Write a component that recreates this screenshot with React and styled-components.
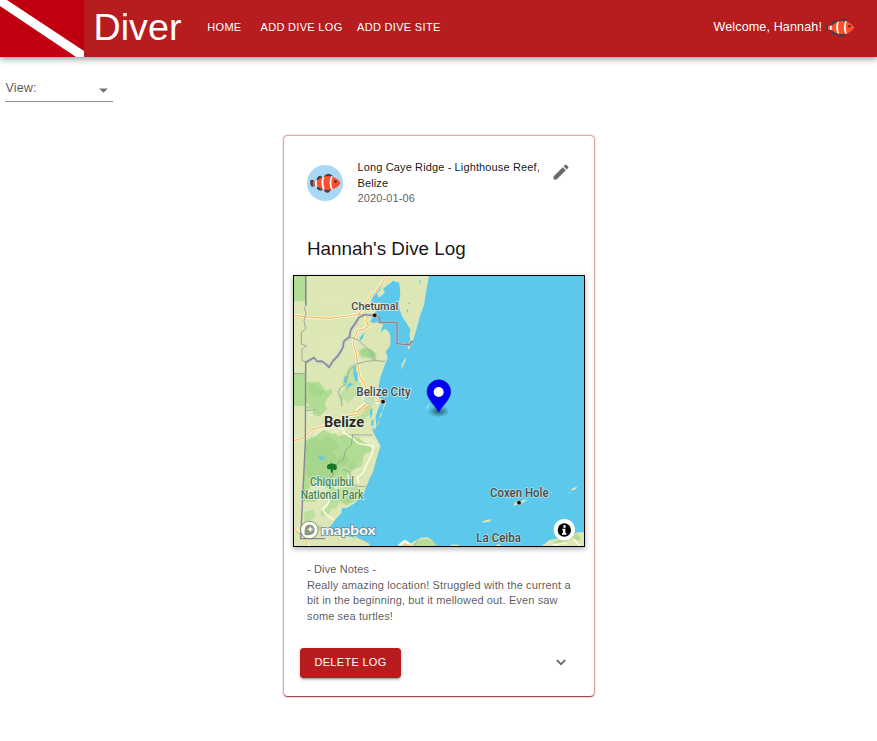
import React from "react";
import styled, { createGlobalStyle } from "styled-components";

const GlobalStyle = createGlobalStyle`
  *, *::before, *::after { box-sizing: border-box; }
  body {
    margin: 0;
    background: #fff;
    color: rgba(0, 0, 0, 0.92);
    font-family: "Liberation Sans", Helvetica, Arial, sans-serif;
    overflow: hidden;
  }
`;

const Page = styled.div`
  min-height: 741px;
`;

const AppBar = styled.header`
  display: flex;
  align-items: center;
  height: 57px;
  padding-right: 22px;
  background: #b71c1f;
  color: #fff;
  box-shadow: 0 2px 4px -1px rgba(0, 0, 0, 0.2), 0 4px 5px rgba(0, 0, 0, 0.14),
    0 1px 10px rgba(0, 0, 0, 0.12);
`;

const FlagLogo = styled.svg`
  display: block;
  flex: none;
  width: 84px;
  height: 57px;
`;

const Brand = styled.h1`
  margin: 0 0 3px 9.5px;
  font-size: 37.7px;
  line-height: 44px;
  font-weight: 400;
`;

const Nav = styled.nav`
  display: flex;
  flex: 1;
  margin-left: 25.8px;
  margin-bottom: 2px;
`;

const NavLink = styled.a`
  margin-right: ${(p) => p.$gap || 0}px;
  font-size: 11px;
  line-height: 19px;
  letter-spacing: 0.314px;
  text-transform: uppercase;
  white-space: nowrap;
`;

const Welcome = styled.div`
  display: flex;
  align-items: center;
  gap: 3px;
  margin-bottom: 3px;
  font-size: 12.57px;
  letter-spacing: 0.118px;
`;

const FishIcon = styled.svg`
  display: block;
  width: ${(p) => p.$width}px;
  height: ${(p) => p.$height}px;
`;

const ViewSelect = styled.div`
  display: flex;
  align-items: center;
  justify-content: space-between;
  width: 108px;
  height: 28px;
  margin: 17px 0 0 5px;
  padding: 0 5px 0 0.5px;
  border-bottom: 1px solid #8c8c8c;
  color: rgba(0, 0, 0, 0.68);
  font-size: 12.57px;
  letter-spacing: 0.118px;
`;

const Arrow = styled.svg`
  width: 9px;
  height: 5px;
  margin-top: 5px;
`;

const Card = styled.article`
  width: 310px;
  height: 560px;
  margin: 34px 0 0 284px;
  border-radius: 4px;
  background: #fff;
  box-shadow: 0 2px 1px -1px rgba(110, 20, 20, 0.5), 0 1px 1px rgba(130, 20, 20, 0.34),
    0 0 1.5px 0.5px rgba(183, 28, 28, 0.48);
`;

const CardHeader = styled.div`
  display: flex;
  height: 92px;
  padding: 24px 24px 0 23px;
`;

const Avatar = styled.div`
  display: flex;
  align-items: center;
  justify-content: center;
  flex: none;
  width: 36px;
  height: 36px;
  margin: 5px 14.5px 0 0;
  border-radius: 50%;
  background: #a9d8f7;
`;

const HeaderText = styled.div`
  flex: 1;
  font-size: 11px;
  line-height: 15.7px;
  letter-spacing: 0.13px;
  white-space: nowrap;
`;

const Muted = styled.div`
  color: rgba(0, 0, 0, 0.68);
`;

const Pencil = styled.svg`
  flex: none;
  width: 20px;
  height: 20px;
  margin: 2px -1px 0 0;
  fill: #6a6a6a;
`;

const Title = styled.h2`
  margin: 0 0 0 23px;
  padding-top: 7.5px;
  height: 47px;
  font-size: 18.86px;
  line-height: 26px;
  font-weight: 400;
`;

const MapFrame = styled.div`
  width: 292px;
  height: 272px;
  margin-left: 9px;
  border: 1px solid #000;
  box-shadow: 0 2px 4px rgba(0, 0, 0, 0.22), 0 2px 8px rgba(0, 0, 0, 0.12);
`;

const MapArt = styled.svg`
  display: block;
  width: 290px;
  height: 270px;
`;

const MapLabel = styled.text`
  font-family: Roboto, "Open Sans", sans-serif;
  font-size: ${(p) => p.$size || 35}px;
  font-weight: ${(p) => p.$weight || 500};
  fill: ${(p) => p.$color || "#4a4a4a"};
  stroke: ${(p) => p.$halo || "rgba(245,248,240,0.8)"};
  stroke-width: 5px;
  stroke-linejoin: round;
  paint-order: stroke;
`;

const Notes = styled.div`
  margin: 15px 0 0 23px;
  color: rgba(0, 0, 0, 0.68);
  font-size: 11px;
  line-height: 15.7px;
  letter-spacing: 0.13px;
  white-space: nowrap;
`;

const Actions = styled.div`
  display: flex;
  align-items: center;
  justify-content: space-between;
  margin: 23px 26px 0 16px;
`;

const DeleteButton = styled.button`
  width: 101px;
  height: 30px;
  padding: 0 0 1px;
  border: 0;
  border-radius: 3.5px;
  background: #b71c1f;
  color: #fff;
  font-family: inherit;
  font-size: 11px;
  letter-spacing: 0.314px;
  box-shadow: 0 3px 1px -2px rgba(0, 0, 0, 0.2), 0 2px 2px rgba(0, 0, 0, 0.14),
    0 1px 5px rgba(0, 0, 0, 0.12);
`;

const Chevron = styled.svg`
  width: 14px;
  height: 14px;
  margin-top: -1px;
`;

function Clownfish({ width, height }) {
  return (
    <FishIcon $width={width} $height={height} viewBox="0 0 90 58" aria-label="Clownfish">
      <g fill="#3e4347">
        <path d="M1 22Q6 17 13 24L18 29L13 38Q6 42 2 36Q0 28 1 22Z" />
        <path d="M19 18Q23 8 31 8L38 14L34 22L22 23Z" />
        <path d="M39 11Q48 0 58 3Q67 6 69 15L50 19Z" />
        <path d="M20 40L34 42L36 50Q28 53 21 47Z" />
        <path d="M40 46L62 45Q58 58 49 57Q41 56 40 46Z" />
      </g>
      <path fill="#ff4f2b" d="M8 23Q13 23 18 27Q28 10 53 9Q77 10 89 29Q79 48 53 49Q29 49 18 34Q13 38 8 37Z" />
      <path fill="#fff" d="M15 24L21 24Q17 30 21 37L15 36Q12 30 15 24ZM36 13L42 11Q35 29 43 48L37 46Q30 29 36 13ZM61 9L66 11Q58 29 66 47L61 48Q53 29 61 9Z" />
      <circle cx="74" cy="25" r="4" fill="#3e322f" />
    </FishIcon>
  );
}

const COAST =
  "M12 12H417L409 55L402 100L391 128L381 166L371 200L361 224L356 235L353 222L361 204L358 188L362 174L350 154L337 134L328 111L327 90L331 67L326 30L300 34L279 51L285 63L270 74L252 82L240 97L262 92L286 88L282 101L263 112L251 127L241 150L252 153L268 149L280 158L275 176L286 170L298 181L302 198L300 222L287 239L293 257L284 280L276 302L270 320L266 343L263 370L272 395L264 412L256 438L260 462L250 480L259 498L272 522L266 539L258 566L250 598L238 621L230 642L222 662L206 682L192 695L170 708L155 709L155 723L137 742L123 761L107 775L110 793L140 809L150 822H12Z";

function DiveMap() {
  return (
    <MapArt viewBox="12 12 870 810" aria-label="Dive site map">
      <rect x="12" y="12" width="870" height="810" fill="#5bc8ec" />
      <path d={COAST} fill="#dce7b5" />

      <g fill="#b0dc94">
        <path d="M12 12H47V80L38 88H12ZM12 305H46V402H12Z" />
        <path d="M49 330L88 329L107 356L126 351V363L109 382L104 402L74 409L48 390Z" />
        <path d="M205 238L219 227L243 230L260 247L258 264L246 265L235 257L215 257Z" />
        <path d="M181 277L201 282L205 330L220 350L210 376L195 370L176 395L161 380L151 394L146 369L165 350L155 329L167 303Z" opacity=".6" />
        <path d="M49 401L102 398L112 410L87 434L65 424L50 440ZM45 508L99 475L129 470L142 493L177 486L207 499L226 512L244 509L256 521L242 537L221 548L218 567L201 570L192 593L169 608L173 626L154 633L139 628L130 656L96 673L74 690L40 688Z" />
        <path d="M130 650L199 643L215 659L205 681L169 701L147 690L139 710L124 710L119 725L96 734L90 720L113 705ZM44 719L69 715L76 730L64 745L41 750Z" opacity=".75" />
        <path d="M191 412L248 404L244 425L226 437L216 455L189 441Z" opacity=".7" />
      </g>
      <g fill="#9bd184" opacity=".5">
        <path d="M47 512L74 498L91 509L108 492L132 500L149 523L128 538L142 558L165 546L176 567L161 582L144 576L145 599L113 625L65 625L46 604Z" />
        <path d="M53 340L70 333L82 349L103 357L90 374L62 367ZM214 233L241 232L257 245L250 256L218 250Z" />
        <path d="M152 686L180 666L201 669L189 690L165 694ZM175 577L220 566L214 584L181 594Z" />
      </g>
      <g fill="#edf0cf" opacity=".7">
        <path d="M69 483L105 455L128 459L153 480L126 486L102 474L68 499ZM207 499L243 496L267 520L250 534L234 518Z" />
        <path d="M67 630L120 651L74 683L45 679ZM47 410H70L67 430L50 442Z" />
      </g>
      <path d="M56 270L117 285L155 220L180 195L145 178L85 188ZM53 75L142 55L191 92L97 114Z" fill="#e7e9bc" opacity=".4" />

      <g fill="#5bc8ec">
        <path d="M258 54L277 38L269 56L260 65L267 78L248 85L240 94L248 76ZM284 54L309 26L328 34L329 62L324 93L306 105L282 103L265 111L273 92L258 90L275 73L290 70Z" />
        <path d="M163 315L170 311L168 330L160 333L163 321ZM190 284L198 281L196 296L203 304V328L197 329L191 310ZM179 332L190 337L175 346L169 358L171 342Z" />
        <path d="M389 26L394 23L389 38ZM355 93L361 91L359 99ZM349 114L355 111L352 123ZM231 157L239 155L237 166L230 164ZM209 198L224 180L219 196L210 208Z" />
        <path d="M277 163L284 160L278 177L273 179ZM240 415L248 409L246 430L241 440ZM243 447L251 442L250 461L245 463ZM247 470L253 468L250 483Z" />
        <path d="M79 550L92 553L94 547L97 557L108 552L101 561L106 567L96 562L92 567L90 557Z" />
      </g>

      <g fill="#dce7b5">
        <path d="M347 255L342 265L334 278L337 291L341 276L347 267ZM335 283L329 297L332 287ZM288 350L283 384L287 373L291 351ZM285 390L276 418L281 410L288 393ZM274 421L267 439L272 436L277 423ZM267 444L263 463L268 452Z" />
        <path d="M575 749L589 744L604 742L601 748L585 752ZM847 649L861 644L859 650L850 655L842 655Z" />
        <path d="M332 822L346 812L364 814L389 797L413 796L428 805L439 822ZM480 822L488 817L507 819L510 822ZM614 822L625 816L637 822ZM755 822L779 804L809 798L833 797L863 781H882V822Z" />
        <path d="M105 788L121 784L139 792L161 790L201 799L232 812L241 822H75Z" />
      </g>
      <path d="M371 815L392 803L413 801L427 811L421 822H375ZM420 805L429 812L440 822H420ZM788 810L820 801L836 806L820 815L794 814ZM842 793L863 786L873 798L867 804L845 803ZM420 801L440 816L435 822ZM77 767L89 758L97 765L86 777L75 776ZM607 799L615 792L634 799L645 811H607Z" fill="#9bd184" opacity=".55" />
      <path d="M669 703L676 691L688 690L711 680L703 690L683 697ZM783 661h3v2h-3ZM837 661h4v2h-4Z" fill="#eee8c6" />
      <path d="M410 410L416 398" stroke="#e4e8c6" strokeWidth="3" />

      <g fill="none" strokeLinecap="round" strokeLinejoin="round">
        <g stroke="#fff9e9" strokeWidth="8">
          <path d="M12 129L64 137L115 139L171 132L206 127L254 126M206 126L219 107L230 88L257 59L292 12M230 132L228 151L236 162L219 171L204 174L192 199L191 221L198 240L203 274L209 314L222 332L231 362L274 386L224 396L194 421" />
          <path d="M12 507L40 497L66 472L102 463L121 446L151 444L172 431L205 428L222 411M12 769L39 788L57 822M329 819L345 807L360 818" />
        </g>
        <g stroke="#f2bd61" strokeWidth="3.7">
          <path d="M12 130L65 136L116 139L171 132L210 127L254 127M206 127L219 107L229 89L258 59L292 12M231 132L229 151L236 162L220 172L204 174L192 198L191 221L198 240L203 274L209 314L222 332L232 363L274 386L231 394L202 417L190 421" />
          <path d="M12 507L40 497L66 472L102 463L121 446L151 444L172 431L205 428L222 411L245 399M12 768L27 784L39 788L54 818M341 819H362" />
        </g>
        <g stroke="#fffce9" strokeWidth="4.2">
          <path d="M158 480L188 499L206 515L250 522L248 541L225 587L219 603L201 618L206 631M119 682L114 695L98 710L106 725L130 742M225 366L219 381L261 394" />
          <path d="M850 800L859 810L870 821M792 819L829 812M132 455L148 470L161 472L164 482" />
        </g>
        <path d="M184 784L203 800L236 816" stroke="#f6dc9b" strokeWidth="4" />
        <path d="M48 12V100L43 108L48 125L42 146L47 173L34 180V216L49 222L36 231V265L47 270M12 305H47M170 200L185 196L206 205L227 225L241 237L249 257L258 266L234 267L196 277L176 297L168 335L149 349L145 364L154 379L156 402M258 266L284 268M188 488L184 518L167 535L160 562L140 576L127 590L129 609L109 637M186 488L219 489H246M160 593L179 599L184 639L196 641L206 643H228M50 667L40 648M389 797L380 810L371 822M48 416L75 413" stroke="#92a19d" strokeWidth="3" opacity=".85" />
        <path d="M48 271L72 257L83 269L108 274L117 286L128 268L147 247L157 229L161 209L178 195L183 171L197 155L207 136L223 127L245 130H254M264 134L267 151H321V215L349 218L359 213L368 209" stroke="#b6c4ce" strokeWidth="9" opacity=".75" />
        <path d="M47 12V98M47 270L46 510L32 800M47 271L72 257L81 268L96 267L107 277L117 286L129 267L143 253L159 226L162 207L178 195L182 174L194 156L207 136L225 128L245 130M264 133L268 138V151H321V215L348 218L354 216L359 220L363 210L369 209M32 800H103" stroke="#868696" strokeWidth="4.2" />
      </g>
      <path d="M220 376L250 374L257 395L239 400L222 390Z" fill="#b9dfbd" opacity=".8" />

      <g fill="#111" stroke="#eee8d9" strokeWidth="2">
        <circle cx="254" cy="130" r="7" />
        <circle cx="279" cy="389" r="7" />
        <circle cx="687" cy="692" r="7" />
      </g>
      <path fill="#157a26" d="M111 585Q110 577 119 576Q123 571 132 576Q141 577 140 585Q142 594 132 595L129 590L128 602H123L121 591L115 592Q110 591 111 585Z" />

      <MapLabel x="184" y="113" textLength="141" lengthAdjust="spacingAndGlyphs">Chetumal</MapLabel>
      <MapLabel x="199" y="372" $size={39} textLength="163" lengthAdjust="spacingAndGlyphs">Belize City</MapLabel>
      <MapLabel x="102" y="464" $size={43} $weight={700} $color="#2b2b2b" textLength="120" lengthAdjust="spacingAndGlyphs">Belize</MapLabel>
      <MapLabel x="60" y="641" $size={36} $color="#438452" textLength="132" lengthAdjust="spacingAndGlyphs">Chiquibul</MapLabel>
      <MapLabel x="32" y="680" $size={36} $color="#438452" textLength="188" lengthAdjust="spacingAndGlyphs">National Park</MapLabel>
      <MapLabel x="600" y="674" $size={37} $halo="rgba(190,230,240,0.85)" textLength="176" lengthAdjust="spacingAndGlyphs">Coxen Hole</MapLabel>
      <MapLabel x="559" y="811" $size={39} $halo="rgba(190,230,240,0.85)" textLength="134" lengthAdjust="spacingAndGlyphs">La Ceiba</MapLabel>

      <circle cx="58" cy="774" r="28" fill="#6f8268" opacity=".8" />
      <circle cx="58" cy="774" r="25" fill="#fff" />
      <path d="M44 789Q41 764 52 759Q64 754 71 764Q78 776 68 786Q60 791 44 789Z" fill="#8b9a78" />
      <path d="M61 763L64 769L70 772L64 775L61 781L58 775L52 772L58 769Z" fill="#fff" />
      <text x="92" y="788" fill="#fff" stroke="#65899a" strokeWidth="5" paintOrder="stroke" strokeLinejoin="round" fontFamily="Lato, sans-serif" fontWeight="700" fontSize="42" textLength="165" lengthAdjust="spacingAndGlyphs">mapbox</text>

      <defs>
        <radialGradient id="pinShadow">
          <stop offset="0" stopColor="#143743" stopOpacity=".75" />
          <stop offset="1" stopColor="#143743" stopOpacity="0" />
        </radialGradient>
      </defs>
      <ellipse cx="446" cy="418" rx="32" ry="18" fill="url(#pinShadow)" />
      <path d="M446 420C436 401 411 381 411 359A35.5 35.5 0 0 1 482 359C482 381 457 401 446 420Z" fill="#0000fb" stroke="#1619a8" strokeWidth="2" />
      <circle cx="446" cy="360" r="15" fill="#fff" />

      <circle cx="823" cy="773" r="32" fill="#fff" />
      <circle cx="823" cy="774" r="20" fill="#000" />
      <path d="M820 760h7v7h-7ZM817 770h9v13h3v5h-13v-5h3v-8h-2Z" fill="#fff" />
    </MapArt>
  );
}

export default function App() {
  return (
    <Page>
      <GlobalStyle />
      <AppBar>
        <FlagLogo viewBox="0 0 84 57" aria-label="Diver down flag">
          <rect width="84" height="57" fill="#c00010" />
          <path d="M0 0H7L84 51V57H76L0 6Z" fill="#fff" />
        </FlagLogo>
        <Brand>Diver</Brand>
        <Nav>
          <NavLink $gap={19}>Home</NavLink>
          <NavLink $gap={14.5}>Add Dive Log</NavLink>
          <NavLink>Add Dive Site</NavLink>
        </Nav>
        <Welcome>
          Welcome, Hannah!
          <Clownfish width={30} height={19} />
        </Welcome>
      </AppBar>

      <ViewSelect>
        View:
        <Arrow viewBox="0 0 9 5">
          <path d="M0.2 0.4H8.8L4.5 4.8Z" fill="#707070" />
        </Arrow>
      </ViewSelect>

      <Card>
        <CardHeader>
          <Avatar>
            <Clownfish width={31} height={20} />
          </Avatar>
          <HeaderText>
            Long Caye Ridge - Lighthouse Reef,
            <br />
            Belize
            <Muted>2020-01-06</Muted>
          </HeaderText>
          <Pencil viewBox="0 0 24 24">
            <path d="M3 17.25V21h3.75L17.81 9.94l-3.75-3.75L3 17.25zM20.71 7.04a1 1 0 0 0 0-1.41l-2.34-2.34a1 1 0 0 0-1.41 0l-1.83 1.83 3.75 3.75 1.83-1.83z" />
          </Pencil>
        </CardHeader>
        <Title>Hannah's Dive Log</Title>
        <MapFrame>
          <DiveMap />
        </MapFrame>
        <Notes>
          - Dive Notes -<br />
          Really amazing location! Struggled with the current a<br />
          bit in the beginning, but it mellowed out. Even saw
          <br />
          some sea turtles!
        </Notes>
        <Actions>
          <DeleteButton>DELETE LOG</DeleteButton>
          <Chevron viewBox="0 0 14 14">
            <path d="M2.8 5L7 9.2L11.2 5" fill="none" stroke="#6e6e6e" strokeWidth="1.8" />
          </Chevron>
        </Actions>
      </Card>
    </Page>
  );
}
